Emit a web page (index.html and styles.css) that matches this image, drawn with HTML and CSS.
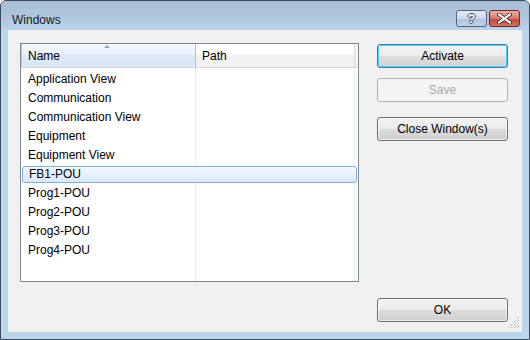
FILE: index.html
```html
<!DOCTYPE html>
<html lang="en">
<head>
  <meta charset="UTF-8">
  <title>Windows</title>
  <link rel="stylesheet" href="styles.css">
</head>
<body>

  <div class="window">
    <div class="titlebar">
      <span class="title">Windows</span>
      <div class="caption-buttons">
        <div class="cap-btn help">?</div>
        <div class="cap-btn close">
          <svg width="15" height="11" viewBox="0 0 15 11">
            <path d="M2 1.5 L13 9.5 M13 1.5 L2 9.5" stroke="#4a2420" stroke-width="4" stroke-linecap="round"/>
            <path d="M2 1.5 L13 9.5 M13 1.5 L2 9.5" stroke="#fff" stroke-width="2.2" stroke-linecap="round"/>
          </svg>
        </div>
      </div>
    </div>

    <div class="frame">
      <div class="client">
        <div class="top-area">

          <!-- list of open windows -->
          <div class="listview">
            <div class="lv-header">
              <div class="col-head sorted">Name<span class="sort-arrow"></span></div>
              <div class="col-head path">Path</div>
              <div class="col-head filler"></div>
            </div>
            <div class="lv-body">
              <div class="row">Application View</div>
              <div class="row">Communication</div>
              <div class="row">Communication View</div>
              <div class="row">Equipment</div>
              <div class="row">Equipment View</div>
              <div class="row selected">FB1-POU</div>
              <div class="row">Prog1-POU</div>
              <div class="row">Prog2-POU</div>
              <div class="row">Prog3-POU</div>
              <div class="row">Prog4-POU</div>
            </div>
          </div>

          <div class="side-buttons">
            <button class="btn default">Activate</button>
            <button class="btn disabled btn-save">Save</button>
            <button class="btn btn-close">Close Window(s)</button>
          </div>
        </div>

        <div class="bottom-area">
          <button class="btn">OK</button>
          <svg class="grip" width="12" height="12" viewBox="0 0 12 12">
            <path d="M11 3 L3 11 M11 6 L6 11 M11 9 L9 11 M11 0 L0 11" stroke="#9a9a9a" stroke-width="1" stroke-dasharray="1 1"/>
          </svg>
        </div>
      </div>
    </div>
  </div>

</body>
</html>
```

FILE: styles.css
```css
* {
  margin: 0;
  padding: 0;
  box-sizing: border-box;
}

html, body {
  width: 530px;
  height: 340px;
  font-family: 'Liberation Sans', Arial, sans-serif;
  font-size: 12px;
  color: #000;
  background: #fff;
  overflow: hidden;
}

.window {
  width: 530px;
  height: 340px;
  display: flex;
  flex-direction: column;
  border: 1px solid #3b4a5c;
  border-radius: 6px 6px 0 0;
  background: #bcd4ec;
  overflow: hidden;
}

.titlebar {
  height: 29px;
  display: flex;
  align-items: flex-start;
  justify-content: space-between;
  padding: 0 9px 0 11px;
  background: linear-gradient(#a7bed6 0%, #adc4dc 45%, #b9d1ea 100%);
}

.title {
  margin-top: 12px;
  font-size: 12px;
  color: #1a1a1a;
}

.caption-buttons {
  display: flex;
  gap: 2px;
  margin-top: 9px;
}

.cap-btn {
  width: 31px;
  height: 17px;
  border-radius: 3px;
  display: flex;
  align-items: center;
  justify-content: center;
}

.help {
  border: 1px solid #56677d;
  background: linear-gradient(#e2eaf4 0%, #c9d8ea 50%, #aec3dc 51%, #bfd2e7 100%);
  color: #fff;
  font-weight: bold;
  font-size: 13px;
  text-shadow: 1px 0 #3f4d60, -1px 0 #3f4d60, 0 1px #3f4d60, 0 -1px #3f4d60;
}

.close {
  border: 1px solid #6e2a24;
  background: linear-gradient(#eab0a4 0%, #d8796b 50%, #c2473c 51%, #d4725f 100%);
}

.frame {
  flex: 1;
  padding: 0 7px 7px 7px;
}

.client {
  height: 302px;
  background: #f0f0f0;
  padding: 13px 14px 0 12px;
  display: flex;
  flex-direction: column;
}

.top-area {
  display: flex;
  gap: 18px;
}

.listview {
  width: 339px;
  height: 239px;
  border: 1px solid #828790;
  background: #fff;
}

.lv-header {
  display: flex;
  height: 24px;
  border-bottom: 1px solid #d5d5d5;
}

.col-head {
  height: 23px;
  line-height: 24px;
  padding-left: 6px;
}

.sorted {
  position: relative;
  width: 175px;
  border-left: 1px solid #a9d1ef;
  border-right: 1px solid #95c6ea;
  background: linear-gradient(#f3f8fd 0%, #e9f2fb 45%, #dde9f7 46%, #d9e7f6 100%);
}

.sort-arrow {
  position: absolute;
  left: 82px;
  top: 1px;
  border-left: 3px solid transparent;
  border-right: 3px solid transparent;
  border-bottom: 3px solid #8ea3bd;
}

.path {
  width: 159px;
  border-right: 1px solid #dcdcdc;
  background: linear-gradient(#ffffff 0%, #ffffff 45%, #f3f3f3 46%, #f1f1f1 100%);
}

.filler {
  flex: 1;
  padding: 0;
  border-left: 1px solid #ececec;
  background: #f6f6f6;
}

.lv-body {
  padding-top: 2px;
  height: 213px;
  background:
    linear-gradient(#e5eef8, #e5eef8) 174px 0 / 1px 100% no-repeat,
    linear-gradient(#e5eef8, #e5eef8) 333px 0 / 1px 100% no-repeat;
}

.row {
  height: 19px;
  line-height: 19px;
  padding-left: 7px;
  white-space: nowrap;
}

.row.selected {
  height: 17px;
  line-height: 15px;
  margin: 1px 1px 1px 1px;
  padding-left: 6px;
  border: 1px solid #84acdd;
  border-radius: 3px;
  background: linear-gradient(#f2f8fe, #d9e9fc);
}

.side-buttons {
  display: flex;
  flex-direction: column;
  padding-top: 1px;
}

.btn {
  width: 131px;
  height: 24px;
  font-family: 'Liberation Sans', Arial, sans-serif;
  font-size: 12px;
  color: #000;
  border: 1px solid #707070;
  border-radius: 3px;
  background: linear-gradient(#f2f2f2 0%, #ebebeb 50%, #dddddd 51%, #cfcfcf 100%);
  box-shadow: inset 0 0 0 1px rgba(255,255,255,0.6);
}

.btn.default {
  border-color: #3c7fb1;
  box-shadow: inset 0 0 0 1px #48d1fb;
  background: linear-gradient(#f4f4f4 0%, #ececec 50%, #dedede 51%, #d2d2d2 100%);
}

.btn.disabled {
  color: #a8a8a8;
  border-color: #adb2b5;
  background: #f4f4f4;
  box-shadow: none;
}

.btn-save {
  margin-top: 10px;
}

.btn-close {
  margin-top: 15px;
}

.bottom-area {
  position: relative;
  flex: 1;
  display: flex;
  justify-content: flex-end;
  align-items: flex-start;
  padding-top: 16px;
}

.grip {
  position: absolute;
  right: -12px;
  bottom: 3px;
}
```
